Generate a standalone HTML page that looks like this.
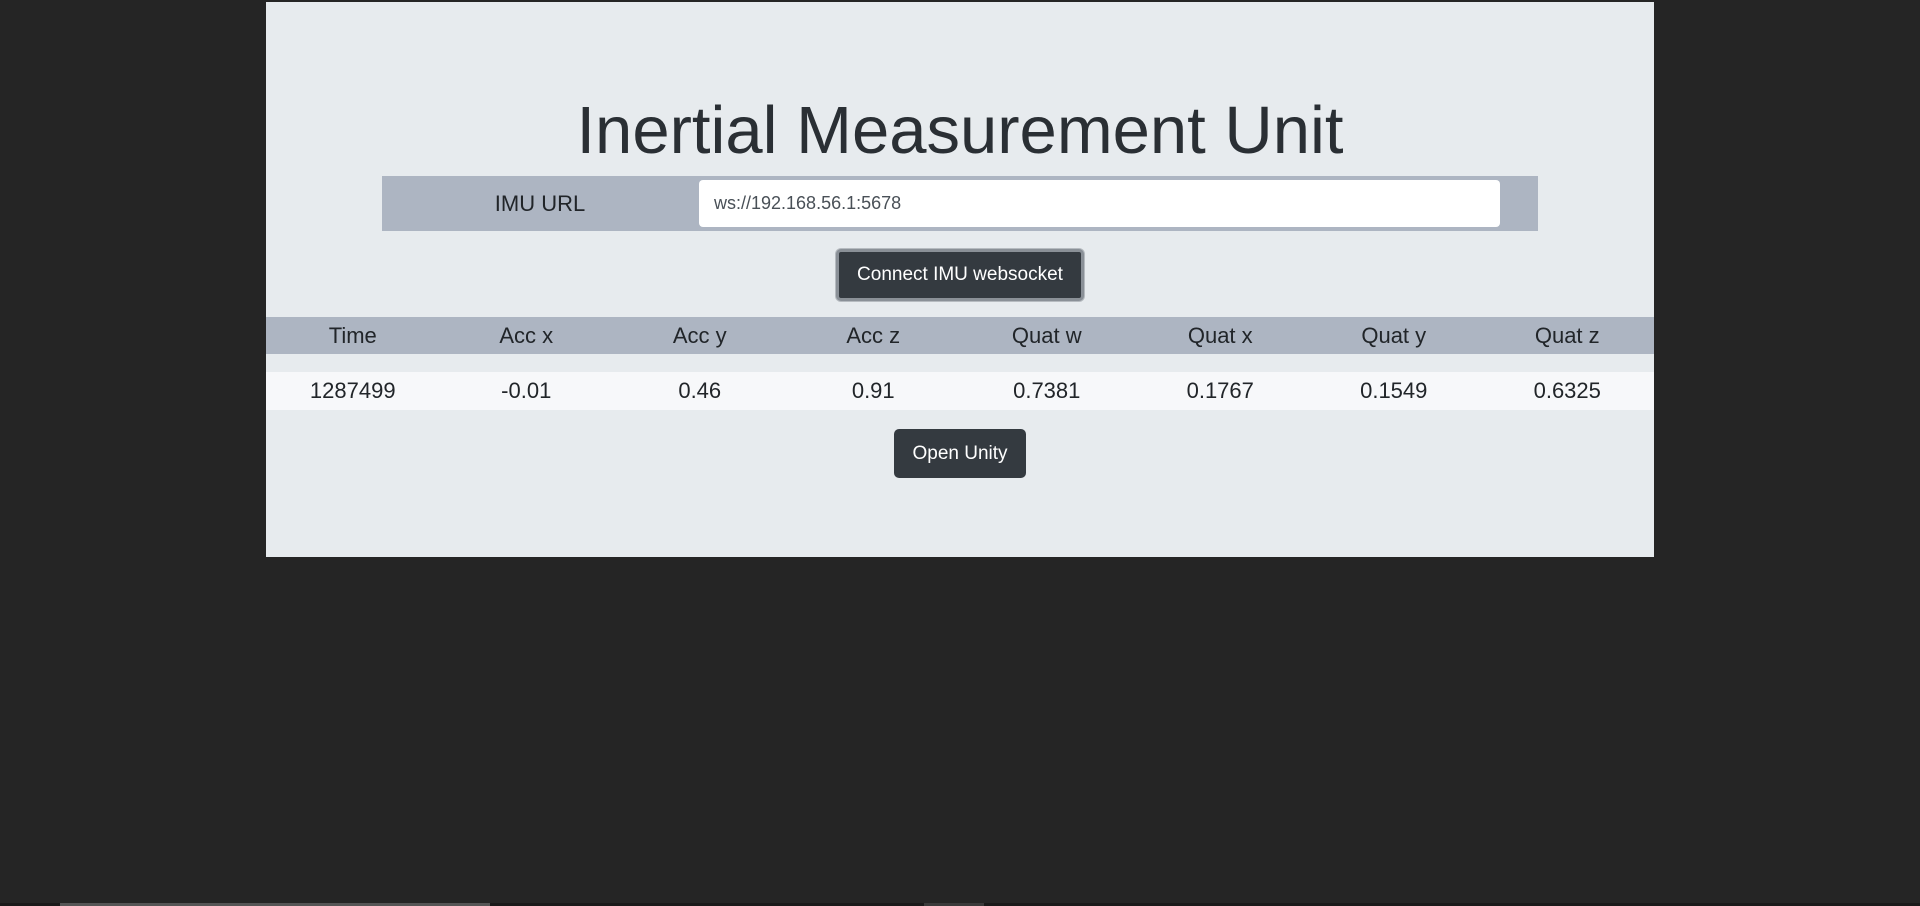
<!DOCTYPE html>
<html><head><meta charset="utf-8"><style>
*{margin:0;padding:0;box-sizing:border-box}
body{width:1920px;height:906px;background:#252525;position:relative;overflow:hidden;font-family:"Segoe UI","Liberation Sans",sans-serif;color:#212529}
.panel{position:absolute;left:266px;top:2px;width:1388px;height:555px;background:#e7ebee}
.title{position:absolute;left:0;width:100%;top:84px;text-align:center;font-size:67px;font-weight:300;line-height:90px;color:#2a2f34}
.urlrow{position:absolute;left:116px;top:174px;width:1156px;height:55px;background:#adb5c2}
.lbl{position:absolute;left:24px;width:268px;top:0;line-height:55px;text-align:center;font-size:22px}
.inp{position:absolute;left:317px;top:4px;width:801px;height:47px;background:#fff;border-radius:4px;font-size:18px;line-height:47px;padding-left:15px;color:#495057}
.btn{position:absolute;background:#343a40;color:#fff;border-radius:5px;text-align:center;font-size:19px}
.b1{left:570px;top:247px;width:248px;height:52px;line-height:46px;border:3px solid #8a9097;box-shadow:0 0 0 1px #b6bbc0}
.b2{left:628px;top:427px;width:132px;height:49px;line-height:49px}
.row{position:absolute;left:0;width:100%;display:flex}
.row div{flex:1;text-align:center;font-size:22px}
.hd{top:315px;height:37px;background:#adb5c2;line-height:37px}
.dt{top:370px;height:38px;background:#f7f8fa;line-height:38px}
.sb{position:absolute;bottom:0;height:3px;background:#555}
</style></head><body>
<div class="panel">
<div class="title">Inertial Measurement Unit</div>
<div class="urlrow"><div class="lbl">IMU URL</div><div class="inp">ws://192.168.56.1:5678</div></div>
<div class="btn b1">Connect IMU websocket</div>
<div class="row hd"><div>Time</div><div>Acc x</div><div>Acc y</div><div>Acc z</div><div>Quat w</div><div>Quat x</div><div>Quat y</div><div>Quat z</div></div>
<div class="row dt"><div>1287499</div><div>-0.01</div><div>0.46</div><div>0.91</div><div>0.7381</div><div>0.1767</div><div>0.1549</div><div>0.6325</div></div>
<div class="btn b2">Open Unity</div>
</div>
<div class="sb" style="left:0;width:1920px;background:#1a1a1a"></div>
<div class="sb" style="left:60px;width:430px"></div>
<div class="sb" style="left:924px;width:60px;background:#3a3a3a"></div>
</body></html>
